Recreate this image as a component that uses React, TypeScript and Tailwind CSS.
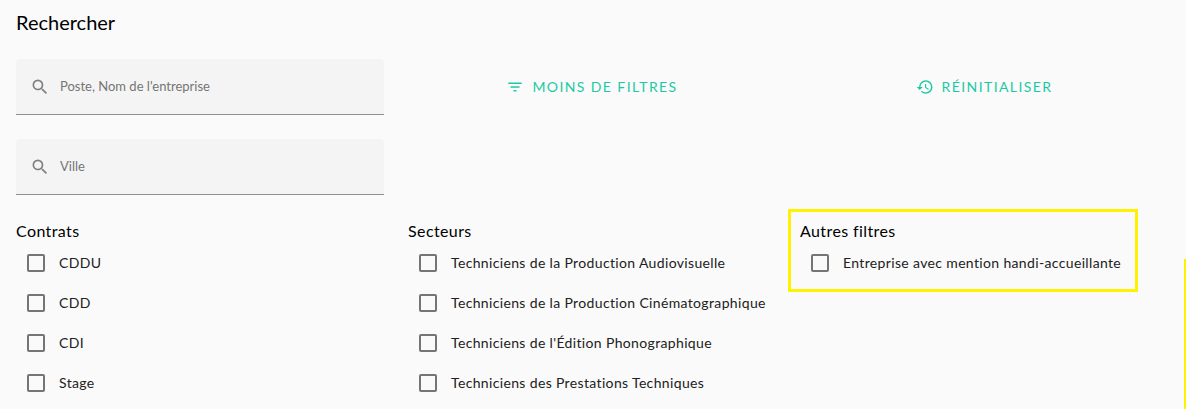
import { useState } from "react";
import { MdFilterList, MdHistory, MdSearch } from "react-icons/md";

const contrats = ["CDDU", "CDD", "CDI", "Stage"];

const secteurs = [
  "Techniciens de la Production Audiovisuelle",
  "Techniciens de la Production Cinématographique",
  "Techniciens de l'Édition Phonographique",
  "Techniciens des Prestations Techniques",
];

const autres = ["Entreprise avec mention handi-accueillante"];

function SearchField({ label }: { label: string }) {
  return (
    <label className="flex h-14 items-center gap-2.5 rounded-t border-b border-[#8e8e8e] bg-[#f4f4f4] px-3.5 text-[#808080]">
      <MdSearch className="size-5 shrink-0" aria-hidden="true" />
      <input
        type="text"
        aria-label={label}
        placeholder={label}
        className="min-w-0 flex-1 bg-transparent text-[13px] text-black outline-none placeholder:text-[#757575]"
      />
    </label>
  );
}

function FilterGroup({ title, options }: { title: string; options: string[] }) {
  const [checked, setChecked] = useState<string[]>([]);

  const toggle = (option: string) =>
    setChecked((prev) =>
      prev.includes(option) ? prev.filter((o) => o !== option) : [...prev, option]
    );

  return (
    <fieldset className="min-w-0">
      <legend className="text-base leading-6 tracking-wide">{title}</legend>
      {options.map((option) => (
        <label key={option} className="flex h-10 items-center gap-3.5 pl-[11px] text-sm tracking-wide text-[#212121]">
          <input
            type="checkbox"
            checked={checked.includes(option)}
            onChange={() => toggle(option)}
            className="size-[18px] shrink-0 appearance-none rounded-xs border-2 border-[#757575] checked:border-[#1dc9a4] checked:bg-[#1dc9a4]"
          />
          {option}
        </label>
      ))}
    </fieldset>
  );
}

export default function App() {
  return (
    <div className="flex min-h-screen bg-[#fafafa] font-[Lato,sans-serif] text-black">
      <main className="min-w-0 flex-1 px-4 pt-1.5">
        <h1 className="text-xl leading-8">Rechercher</h1>

        <div className="mt-[21px] grid grid-cols-3 gap-6">
          <SearchField label="Poste, Nom de l'entreprise" />
          <button
            type="button"
            className="flex items-center justify-center gap-2 text-sm tracking-widest text-[#1dc9a4] uppercase"
          >
            <MdFilterList className="size-[18px]" aria-hidden="true" />
            Moins de filtres
          </button>
          <button
            type="button"
            className="flex items-center justify-center gap-2 text-sm tracking-widest text-[#1dc9a4] uppercase"
          >
            <MdHistory className="size-[18px]" aria-hidden="true" />
            Réinitialiser
          </button>
          <SearchField label="Ville" />
        </div>

        <div className="mt-6 grid grid-cols-3 gap-6">
          <FilterGroup title="Contrats" options={contrats} />
          <FilterGroup title="Secteurs" options={secteurs} />
          <div className="relative">
            <FilterGroup title="Autres filtres" options={autres} />
            {/* highlight frame drawn over the group */}
            <div className="pointer-events-none absolute -top-2.5 right-[30px] -left-3 h-[83px] border-3 border-[#fff200]" />
          </div>
        </div>
      </main>
      <div className="mt-[259px] w-0.5 shrink-0 bg-[#fff200]" />
    </div>
  );
}
